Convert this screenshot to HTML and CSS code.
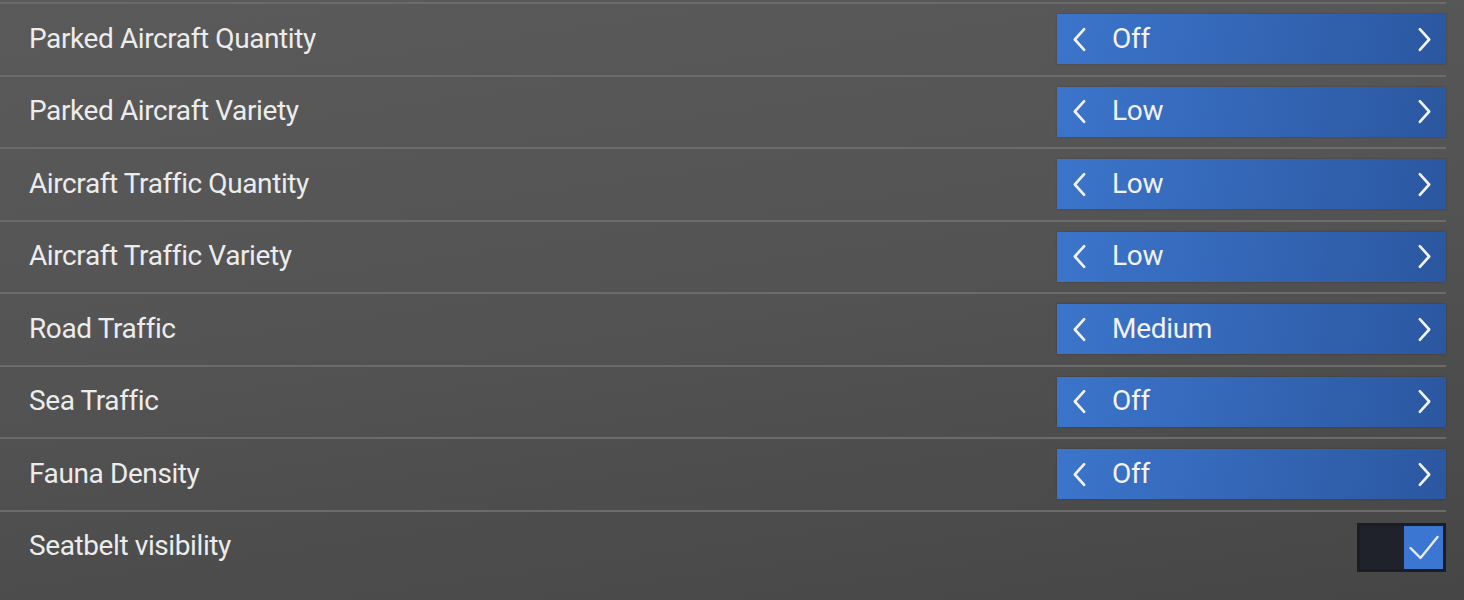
FILE: index.html
```html
<!DOCTYPE html>
<html>
  <head>
    <title>Traffic Settings</title>
    <link rel="stylesheet" href="styles.css">
  </head>
  <body>
    <div class="list">
      <div class="row">
        <span class="label">Parked Aircraft Quantity</span>
        <div class="picker">
          <svg class="chev" viewBox="0 0 16 26"><path d="M13 2 L3 13 L13 24"/></svg>
          <span class="value">Off</span>
          <svg class="chev right" viewBox="0 0 16 26"><path d="M3 2 L13 13 L3 24"/></svg>
        </div>
      </div>
      <div class="row">
        <span class="label">Parked Aircraft Variety</span>
        <div class="picker">
          <svg class="chev" viewBox="0 0 16 26"><path d="M13 2 L3 13 L13 24"/></svg>
          <span class="value">Low</span>
          <svg class="chev right" viewBox="0 0 16 26"><path d="M3 2 L13 13 L3 24"/></svg>
        </div>
      </div>
      <div class="row">
        <span class="label">Aircraft Traffic Quantity</span>
        <div class="picker">
          <svg class="chev" viewBox="0 0 16 26"><path d="M13 2 L3 13 L13 24"/></svg>
          <span class="value">Low</span>
          <svg class="chev right" viewBox="0 0 16 26"><path d="M3 2 L13 13 L3 24"/></svg>
        </div>
      </div>
      <div class="row">
        <span class="label">Aircraft Traffic Variety</span>
        <div class="picker">
          <svg class="chev" viewBox="0 0 16 26"><path d="M13 2 L3 13 L13 24"/></svg>
          <span class="value">Low</span>
          <svg class="chev right" viewBox="0 0 16 26"><path d="M3 2 L13 13 L3 24"/></svg>
        </div>
      </div>
      <div class="row">
        <span class="label">Road Traffic</span>
        <div class="picker">
          <svg class="chev" viewBox="0 0 16 26"><path d="M13 2 L3 13 L13 24"/></svg>
          <span class="value">Medium</span>
          <svg class="chev right" viewBox="0 0 16 26"><path d="M3 2 L13 13 L3 24"/></svg>
        </div>
      </div>
      <div class="row">
        <span class="label">Sea Traffic</span>
        <div class="picker">
          <svg class="chev" viewBox="0 0 16 26"><path d="M13 2 L3 13 L13 24"/></svg>
          <span class="value">Off</span>
          <svg class="chev right" viewBox="0 0 16 26"><path d="M3 2 L13 13 L3 24"/></svg>
        </div>
      </div>
      <div class="row">
        <span class="label">Fauna Density</span>
        <div class="picker">
          <svg class="chev" viewBox="0 0 16 26"><path d="M13 2 L3 13 L13 24"/></svg>
          <span class="value">Off</span>
          <svg class="chev right" viewBox="0 0 16 26"><path d="M3 2 L13 13 L3 24"/></svg>
        </div>
      </div>
      <div class="row">
        <span class="label">Seatbelt visibility</span>
        <div class="toggle">
          <span class="off-side"></span>
          <span class="on-side">
            <svg viewBox="0 0 38 43"><path d="M6 22 L16 32 L33 11"/></svg>
          </span>
        </div>
      </div>
    </div>
  </body>
</html>
```

FILE: styles.css
```css
body {
  margin: 0;
  height: 600px;
  overflow: hidden;
  font-family: Roboto, "Liberation Sans", sans-serif;
  color: #ececec;
  background: linear-gradient(172deg, #5a5a5a 0%, #545454 45%, #464646 100%);
}
.list {
  padding-top: 2px;
  margin-right: 18px;
}
.row {
  display: flex;
  align-items: center;
  justify-content: space-between;
  height: 70.5px;
  border-top: 2px solid #6b6b6b;
  padding-left: 29px;
}
.label {
  font-size: 28px;
  letter-spacing: -0.4px;
  margin-top: -2px;
}
.picker {
  display: flex;
  align-items: center;
  width: 389px;
  height: 50px;
  box-sizing: border-box;
  padding: 0 14px 0 15px;
  background: linear-gradient(100deg, #3b75cb 0%, #3466b6 50%, #2b57a0 100%);
  box-shadow: 0 0 2px rgba(0, 0, 0, 0.25);
}
.chev {
  width: 15px;
  height: 25px;
  fill: none;
  stroke: #f2f2f2;
  stroke-width: 2.8;
  stroke-linecap: round;
  stroke-linejoin: round;
}
.chev.right {
  margin-left: auto;
}
.value {
  font-size: 28px;
  letter-spacing: -0.3px;
  color: #f2f2f2;
  margin-left: 25px;
  margin-top: -2px;
}
.toggle {
  display: flex;
  width: 89px;
  height: 49px;
  box-sizing: border-box;
  border: 3px solid #1b1d23;
  background: #1f222a;
  margin-top: 2px;
}
.off-side {
  flex: 1;
}
.on-side {
  width: 39px;
  background: #3a76d2;
  display: flex;
}
.on-side svg {
  width: 39px;
  height: 43px;
  fill: none;
  stroke: #e6ecf5;
  stroke-width: 2.4;
  stroke-linecap: round;
  stroke-linejoin: round;
}
```
